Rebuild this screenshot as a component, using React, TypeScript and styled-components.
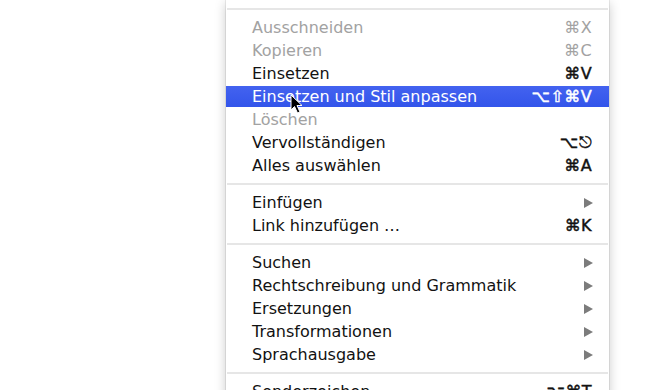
import styled, { createGlobalStyle } from 'styled-components';

const GlobalStyle = createGlobalStyle`
  html, body {
    margin: 0;
    padding: 0;
    background: #ffffff;
  }
  body {
    font-family: "DejaVu Sans", "Liberation Sans", sans-serif;
  }
`;

const Page = styled.div`
  width: 660px;
  height: 390px;
  overflow: hidden;
  display: flex;
  padding-left: 226px;
  box-sizing: border-box;
`;

const Menu = styled.div`
  position: relative;
  width: 383px;
  align-self: flex-start;
  padding-top: 2px;
  background: #ffffff;
  box-shadow: 0 0 0 1px rgba(0, 0, 0, 0.07), 0 3px 11px rgba(0, 0, 0, 0.22);
  display: flex;
  flex-direction: column;
`;

const Separator = styled.div`
  height: 2px;
  margin: 6px 1px;
  background: #e6e6e6;
`;

const Row = styled.div<{ $disabled?: boolean; $active?: boolean }>`
  height: 23px;
  display: flex;
  align-items: center;
  justify-content: space-between;
  padding: 0 17px 0 26px;
  font-size: 16px;
  color: ${({ $disabled, $active }) => ($active ? '#ffffff' : $disabled ? '#a2a2a2' : '#121212')};
  background: ${({ $active }) => ($active ? 'linear-gradient(#4463f0, #3254ea)' : 'transparent')};
  box-shadow: ${({ $active }) => ($active ? 'inset 0 1px 0 #fff, inset 0 -1px 0 #fff' : 'none')};
  white-space: nowrap;
`;

const Label = styled.span`
  line-height: 23px;
`;

const Shortcut = styled.span<{ $disabled?: boolean }>`
  font-size: 16px;
  letter-spacing: 0.4px;
  line-height: 23px;
  -webkit-text-stroke: ${({ $disabled }) => ($disabled ? '0' : '0.45px currentColor')};
`;

const SubArrow = styled.span`
  width: 0;
  height: 0;
  margin-right: -1px;
  border-top: 5px solid transparent;
  border-bottom: 5px solid transparent;
  border-left: 9px solid #7c7c7c;
`;

const Pointer = styled.svg`
  position: absolute;
  left: 64px;
  top: 94px;
`;

type Item = {
  label: string;
  shortcut?: string;
  disabled?: boolean;
  active?: boolean;
  submenu?: boolean;
};

const groups: Item[][] = [
  [
    { label: 'Ausschneiden', shortcut: '⌘X', disabled: true },
    { label: 'Kopieren', shortcut: '⌘C', disabled: true },
    { label: 'Einsetzen', shortcut: '⌘V' },
    { label: 'Einsetzen und Stil anpassen', shortcut: '⌥⇧⌘V', active: true },
    { label: 'Löschen', disabled: true },
    { label: 'Vervollständigen', shortcut: '⌥⎋' },
    { label: 'Alles auswählen', shortcut: '⌘A' },
  ],
  [
    { label: 'Einfügen', submenu: true },
    { label: 'Link hinzufügen …', shortcut: '⌘K' },
  ],
  [
    { label: 'Suchen', submenu: true },
    { label: 'Rechtschreibung und Grammatik', submenu: true },
    { label: 'Ersetzungen', submenu: true },
    { label: 'Transformationen', submenu: true },
    { label: 'Sprachausgabe', submenu: true },
  ],
  [{ label: 'Sonderzeichen …', shortcut: '⌥⌘T' }],
];

export default function App() {
  return (
    <>
      <GlobalStyle />
      <Page>
        <Menu>
          {groups.map((group, gi) => (
            <div key={gi}>
              <Separator />
              {group.map((item) => (
                <Row key={item.label} $disabled={item.disabled} $active={item.active}>
                  <Label>{item.label}</Label>
                  {item.submenu ? (
                    <SubArrow />
                  ) : item.shortcut ? (
                    <Shortcut $disabled={item.disabled}>{item.shortcut}</Shortcut>
                  ) : null}
                </Row>
              ))}
            </div>
          ))}
          <Pointer width="13" height="20" viewBox="0 0 13 20">
            <path d="M1 1 L1 16 L4.5 12.5 L7.5 19 L10 18 L7 11.5 L12 11.5 Z" fill="#000" stroke="#fff" strokeWidth="1" strokeLinejoin="round" />
          </Pointer>
        </Menu>
      </Page>
    </>
  );
}
